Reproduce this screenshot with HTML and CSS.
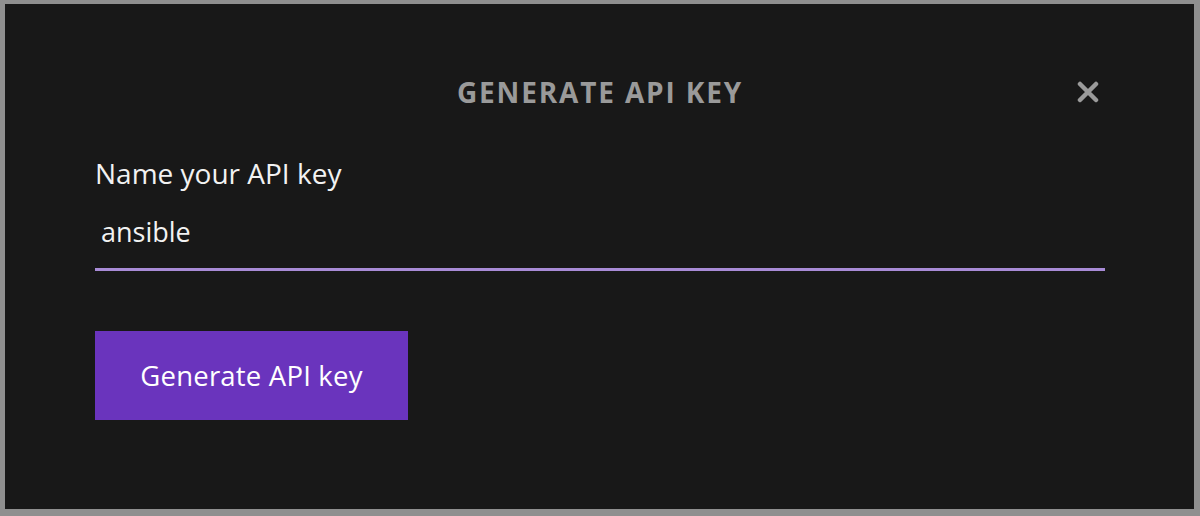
FILE: index.html
```html
<!DOCTYPE html>
<html>
<head>
<meta charset="utf-8">
<link rel="stylesheet" href="styles.css">
</head>
<body>
<div class="frame">
  <div class="modal">
    <div class="header">
      <span></span>
      <h1 class="title">GENERATE API KEY</h1>
      <button class="close" aria-label="Close">
        <svg width="22" height="22" viewBox="0 0 22 22"><path d="M3 3 L19 19 M19 3 L3 19" stroke="#9b9b9b" stroke-width="4.5" stroke-linecap="round"/></svg>
      </button>
    </div>
    <div class="field">
      <label class="label">Name your API key</label>
      <div class="input">ansible</div>
    </div>
    <button class="primary">Generate API key</button>
  </div>
</div>
</body>
</html>
```
FILE: styles.css
```css
html, body {
  margin: 0;
  padding: 0;
}
body {
  background: #8f8f8f;
  font-family: "Open Sans", "Noto Sans", sans-serif;
}
.frame {
  padding: 4px 6px 7px 5px;
  height: 516px;
  box-sizing: border-box;
}
.modal {
  background: #181818;
  height: 100%;
  box-sizing: border-box;
  padding: 68px 89px 0 90px;
  display: flex;
  flex-direction: column;
  align-items: flex-start;
}
.header {
  align-self: stretch;
  display: grid;
  grid-template-columns: 1fr auto 1fr;
  align-items: center;
  height: 40px;
}
.title {
  margin: 0;
  font-size: 28px;
  line-height: 40px;
  font-weight: 700;
  letter-spacing: 1.85px;
  color: #9a9a9a;
}
.close {
  justify-self: end;
  margin-right: 6px;
  background: none;
  border: 0;
  padding: 0;
  width: 22px;
  height: 22px;
  display: block;
  cursor: pointer;
}
.close svg { display: block; }
.field {
  align-self: stretch;
  margin-top: 43px;
  display: flex;
  flex-direction: column;
}
.label {
  color: #f2f2f2;
  font-size: 28px;
  line-height: 36px;
}
.input {
  margin-top: 23px;
  color: #f2f2f2;
  font-size: 27px;
  line-height: 36px;
  padding: 0 0 18px 6px;
  border-bottom: 3px solid #a88bd6;
}
.primary {
  margin-top: 60px;
  width: 313px;
  height: 89px;
  background: #6a34bd;
  border: 0;
  color: #ffffff;
  font-family: inherit;
  font-size: 27.5px;
  letter-spacing: 0.2px;
  padding: 0;
}
```
